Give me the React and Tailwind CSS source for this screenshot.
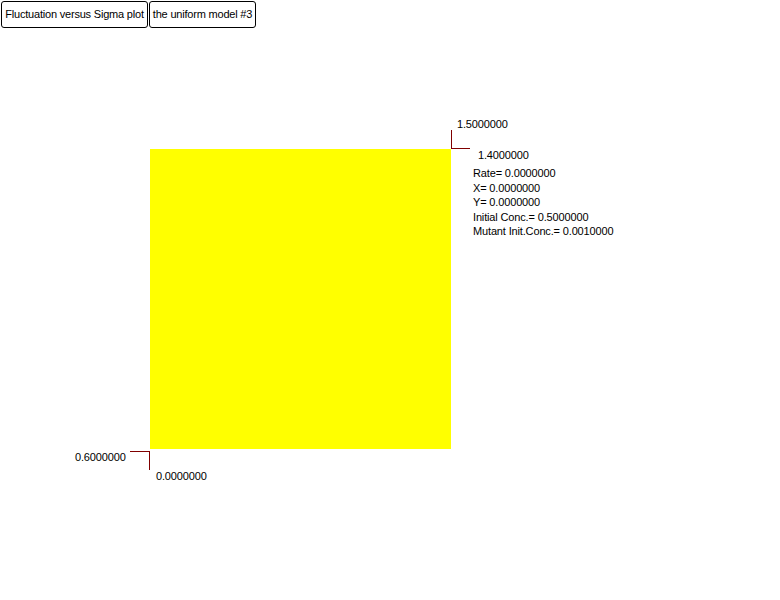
export default function App() {
  const info = [
    'Rate= 0.0000000',
    'X= 0.0000000',
    'Y= 0.0000000',
    'Initial Conc.= 0.5000000',
    'Mutant Init.Conc.= 0.0010000',
  ];

  return (
    <div
      className="w-[780px] h-[600px] bg-white text-black overflow-hidden text-[11px] tracking-[-0.15px]"
      style={{ fontFamily: '"Liberation Sans", Arial, sans-serif' }}
    >
      <div className="flex gap-[1px] pt-[1px] pl-[1px]">
        <button
          type="button"
          className="w-[147px] h-[27px] border border-black rounded-[3px] bg-white text-black tracking-[-0.2px] leading-none"
        >
          Fluctuation versus Sigma plot
        </button>
        <button
          type="button"
          className="w-[107px] h-[27px] border border-black rounded-[3px] bg-white text-black tracking-[-0.2px] leading-none"
        >
          the uniform model #3
        </button>
      </div>

      {/* plot canvas: yellow field, ticks and labels placed around it */}
      <div className="relative ml-[150px] mt-[121px] w-[301px] h-[300px] bg-[#ffff00]">
        {/* upper-right tick */}
        <div className="absolute left-[301px] top-[-19px] w-px h-[19px] bg-[#800000]" />
        <div className="absolute left-[301px] top-[-1px] w-[19px] h-px bg-[#800000]" />
        <div className="absolute left-[307px] top-[-31px] leading-[13px]">1.5000000</div>
        <div className="absolute left-[323px] top-0 flex flex-col">
          <span className="pl-[5px] leading-[13px] mb-[4px]">1.4000000</span>
          {info.map((line) => (
            <span key={line} className="leading-[14.5px] whitespace-nowrap">
              {line}
            </span>
          ))}
        </div>

        {/* lower-left tick */}
        <div className="absolute left-[-20px] top-[302px] w-[19px] h-px bg-[#800000]" />
        <div className="absolute left-[-1px] top-[302px] w-px h-[19px] bg-[#800000]" />
        <div className="absolute left-[-75px] top-[302px] leading-[13px]">0.6000000</div>
        <div className="absolute left-[6px] top-[321px] leading-[13px]">0.0000000</div>
      </div>
    </div>
  );
}
